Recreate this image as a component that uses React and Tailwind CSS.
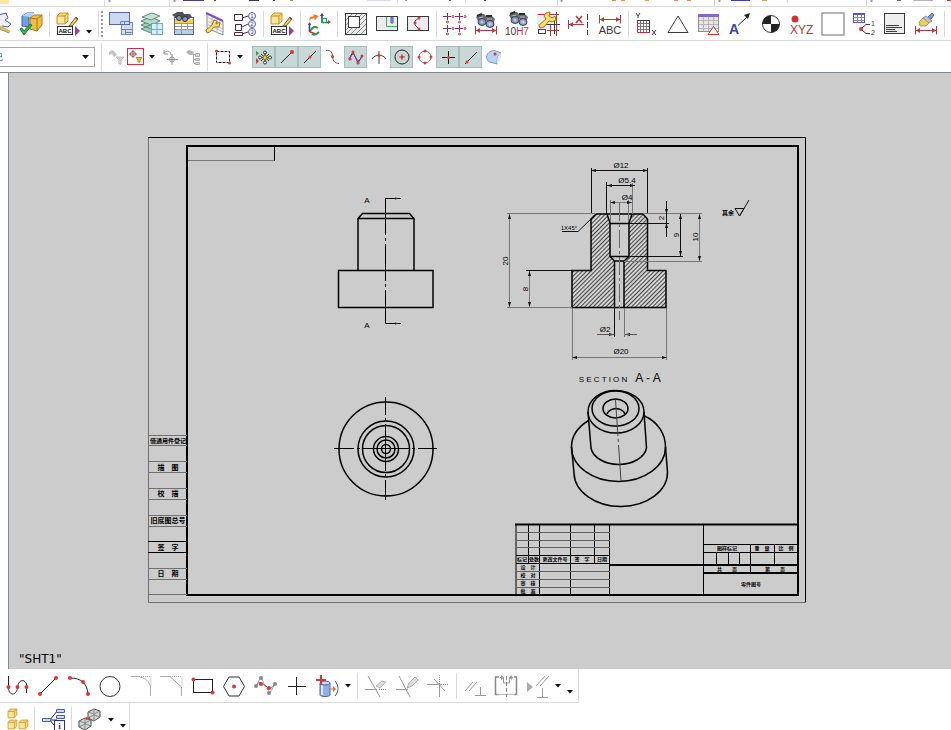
import React from 'react';

const RED = '#b5383a';
const INK = '#3a3a3a';

function Icon({ children, size = 24 }) {
  return (
    <svg width={size} height={size} viewBox={`0 0 ${size} ${size}`} fill="none" className="shrink-0 overflow-visible">
      {children}
    </svg>
  );
}

function Tool({ label, children }) {
  return (
    <button type="button" aria-label={label} className="flex h-[33px] w-[31px] shrink-0 items-center justify-center">
      {children}
    </button>
  );
}

function Snap({ label, on, children }) {
  return (
    <button
      type="button"
      aria-label={label}
      className={
        on
          ? 'flex h-[22px] w-[23px] shrink-0 items-center justify-center border border-[#a3c0bc] bg-[#c8d8d6]'
          : 'flex h-[22px] w-[23px] shrink-0 items-center justify-center'
      }
    >
      {children}
    </button>
  );
}

function Caret({ label = 'More', low }) {
  return (
    <button type="button" aria-label={label} className={low ? 'flex w-3 shrink-0 items-center justify-center self-stretch pt-3' : 'flex w-3 shrink-0 items-center justify-center self-stretch'}>
      <svg width="6" height="4" viewBox="0 0 6 4"><path d="M0 0H6L3 3.500z" fill="#111" /></svg>
    </button>
  );
}

function Sep() {
  return <div className="ml-[3px] mr-0.5 h-[26px] w-px shrink-0 bg-[#d9d9d9]" />;
}

function Dot({ x, y, r = 2, c = '#d93636' }) {
  return <circle cx={x} cy={y} r={r} fill={c} />;
}

// parts shared by several icons
function Binoculars({ y = 0 }) {
  return (
    <g transform={`translate(0 ${y})`}>
      <path d="M2 4L6 1H10L12 3H18L21 6L20 9H14L11 7L8 8H4z" fill="#6a6d73" />
      <path d="M3 3L8 1M12 3L18 3" stroke="#2c2c2c" strokeWidth="2" />
      <path d="M5 5L9 4M13 6L18 6" stroke="#b5b8be" />
      <ellipse cx="8" cy="9" rx="4" ry="3.500" fill="#8794bd" stroke="#3d4148" />
      <ellipse cx="16" cy="11" rx="4" ry="3.500" fill="#8fa0d6" stroke="#3d4148" />
      <circle cx="8" cy="9" r="1.500" fill="#b9c4e8" />
      <circle cx="16" cy="11" r="1.500" fill="#c6d2f4" />
    </g>
  );
}

function DimBar({ y = 19 }) {
  return (
    <g transform={`translate(0 ${y})`}>
      <path d="M1.500 -4V4.500M22.500 -4V4.500M2 0.500H22" stroke={RED} />
      <path d="M2 .5L6 -2V3zM22 .5L18 -2V3z" fill={RED} />
    </g>
  );
}

function Box({ x, y, s = 1 }) {
  return (
    <g transform={`translate(${x} ${y}) scale(${s})`} strokeLinejoin="round">
      <path d="M0 3L3 0H11V8L8 11H0z" fill="#f7d770" stroke="#c49b35" />
      <path d="M0 3H8L11 0M8 3V11" stroke="#c49b35" />
      <path d="M1 4H7V10H1z" fill="#fbe59a" />
    </g>
  );
}

function GlassBox({ x, y }) {
  return (
    <g transform={`translate(${x} ${y})`} stroke="#4c4c4c" strokeLinejoin="round">
      <path d="M1 4L7 1L13 3V9L7 13L1 10z" fill="#d3d6d6" />
      <path d="M1 4L7 6L13 3M7 6V13M7 1V7L1 10M7 7L13 9" stroke="#8a8a8a" />
    </g>
  );
}

function Wrench({ x = 0, y = 0 }) {
  return (
    <g transform={`translate(${x} ${y})`}>
      <path d="M8 1L12 0L11 4L14 6L17 4L18 8L14 10L11 9L6 15L2 16L1 13L8 7L6 4z" fill="#f6dc68" stroke="#9c7a1c" />
    </g>
  );
}

function AnnotateIcon() {
  return (
    <Icon>
      <Box x={1} y={1} />
      <path d="M13 14L20 5L22 7L16 14z" fill="#f2ce62" stroke="#7d6327" />
      <path d="M20 6L21 7" stroke="#c03030" strokeWidth="2" />
      <rect x="1.500" y="14.500" width="15" height="8" fill="#fff" stroke="#332c3c" />
      <text x="9" y="21" fontSize="6" fontWeight="700" textAnchor="middle" fill="#111" fontFamily="Liberation Sans, sans-serif">ABC</text>
      <path d="M19 14L24 19L19 24z" fill="#9b3aa8" />
    </Icon>
  );
}

const clippedTop = [
  ['w-[9px]', 'bg-[#fbe7a0]'],
  ['w-[174px]', ''],
  ['w-[21px]', 'bg-[#4b3a86]'],
  ['w-[10px]', ''],
  ['w-[2px]', 'bg-[#555555]'],
  ['w-[33px]', ''],
  ['w-[10px]', 'bg-[#3a3a3a]'],
  ['w-[14px]', ''],
  ['w-[2px]', 'bg-[#444444]'],
  ['w-[15px]', ''],
  ['w-[3px]', 'bg-[#b9965a]'],
  ['w-[74px]', ''],
  ['w-[24px]', 'bg-[#d9daf2]'],
  ['w-[14px]', ''],
  ['w-[2px]', 'bg-[#8f8f9b]'],
  ['w-[42px]', ''],
  ['w-[2px]', 'bg-[#5a5a8f]'],
  ['w-[33px]', ''],
  ['w-[2px]', 'bg-[#444444]'],
  ['w-[126px]', ''],
  ['w-[4px]', 'bg-[#ee8a4c]'],
  ['w-[5px]', ''],
  ['w-[4px]', 'bg-[#ee8a4c]'],
  ['w-[20px]', ''],
  ['w-[4px]', 'bg-[#d9a545]'],
  ['w-[25px]', ''],
  ['w-[4px]', 'bg-[#ee8a4c]'],
  ['w-[9px]', ''],
  ['w-[4px]', 'bg-[#ee8a4c]'],
  ['w-[40px]', ''],
  ['w-[19px]', 'bg-[#3d3dbb]'],
  ['w-[12px]', ''],
  ['w-[5px]', 'bg-[#cda94e]'],
  ['w-[130px]', ''],
  ['w-[4px]', 'bg-[#6e6480]'],
  ['w-[12px]', ''],
  ['w-[20px]', 'bg-[#b5b5b5]'],
  ['w-[14px]', ''],
  ['w-[4px]', 'bg-[#b5383a]'],
];

function TopStrip() {
  return (
    <div className="relative h-[7px] shrink-0 overflow-hidden border-b border-[#d9d9d9]">
      <div className="flex">
        {clippedTop.map(([w, c], i) => (
          <span key={i} className={`${i === 0 ? 'h-1' : 'h-px'} shrink-0 ${w} ${c}`} />
        ))}
      </div>
      <svg className="absolute left-0 top-0 h-1.5 w-full">
        <path d="M104.500 0V6M169.500 0V6M397.500 0V3M465.500 0V3M557.500 0V6M714.500 0V6M787.500 0V3M866.500 0V6" stroke="#d9d9d9" />
        <path d="M109.500 0V2M174.500 0V2M561.500 0V2M719.500 0V2M871.500 0V2" stroke="#999" strokeWidth="2" />
      </svg>
    </div>
  );
}

function DraftingBar() {
  return (
    <div className="flex h-[34px] shrink-0 items-center overflow-hidden border-b border-[#d9d9d9]">
      <div className="-ml-4 flex">
        <Tool label="Sketch section">
          <Icon>
            <path d="M10 3L18 1L20 6L17 8L23 12L20 15L14 14" stroke="#5558b8" fill="#eef0ff" />
            <path d="M10 14L22 20" stroke="#d9b95c" strokeWidth="3" />
            <path d="M9 16L21 21" stroke="#7f9f8f" />
          </Icon>
        </Tool>
      </div>
      <Tool label="Update views">
        <Icon>
          <path d="M3 4L8 1H15L10 5V15L3 14z" fill="#6fa0e6" stroke="#3c65a8" />
          <path d="M3 4L8 1H16L11 5z" fill="#b3d3fa" />
          <path d="M11 6L15 3L23 3V13L18 19L11 17z" fill="#efbd3f" stroke="#a67a1c" />
          <path d="M11 6L18 7L23 3M18 7V19" stroke="#a67a1c" />
          <path d="M1 17L3 16L5 19L11 12L13 13L5 23z" fill="#35b24c" stroke="#1e7d33" />
        </Icon>
      </Tool>
      <Sep />
      <Tool label="Edit annotation"><AnnotateIcon /></Tool>
      <div className="flex h-4 self-end"><Caret /></div>
      <Sep />
      <div className="h-[26px] w-0 border-l-2 border-dotted border-[#999999]" />
      <div className="w-0.5" />
      <Tool label="New sheet">
        <Icon>
          <rect x="12.500" y="10.500" width="11" height="12" fill="#d2dcf3" stroke="#7a89b8" />
          <rect x=".5" y=".5" width="20" height="12" fill="#cdd8f2" stroke="#5668a8" />
          <path d="M11.500 12V9.500H20M15.500 10V12" stroke="#7783a2" />
          <path d="M13 17.500H23M16.500 18V22M16 20.500H23" stroke="#7783a2" />
        </Icon>
      </Tool>
      <Tool label="View layers">
        <Icon>
          <path d="M1 17L10 13L20 17L11 21zM1 13L10 9L20 13L11 17z" fill="#a3cfbd" stroke="#5f8b7c" />
          <path d="M1 9L11 5L20 9L11 13z" fill="#b4dcca" stroke="#5f8b7c" />
          <path d="M2 5L12 1L20 4L11 8z" fill="#c3e6d5" stroke="#5f8b7c" />
          <rect x="11.500" y="11.500" width="11" height="11" fill="#d6effa" stroke="#74a8c2" />
          <path d="M11 17.500H23M17 11V23" stroke="#74a8c2" />
        </Icon>
      </Tool>
      <Tool label="Find in parts list">
        <Icon>
          <rect x="3.500" y="5.500" width="19" height="17" fill="#fff" stroke="#666" />
          <rect x="4" y="7" width="18" height="4" fill="#f6cf4c" />
          <rect x="4" y="17" width="18" height="5" fill="#b5cdf0" />
          <path d="M4 11.500H22M4 14.500H22M4 17.500H22M10.500 11V22M16.500 11V17" stroke="#999" />
          <path d="M1 3L6 0H12L13 2H19L21 5L18 7L13 7L9 7L5 6z" fill="#50535a" />
          <ellipse cx="8" cy="6" rx="2.500" ry="2.500" fill="#8797c2" stroke="#333" />
          <ellipse cx="14" cy="7" rx="2.500" ry="2.500" fill="#8797c2" stroke="#333" />
        </Icon>
      </Tool>
      <Tool label="Edit view grid">
        <Icon>
          <path d="M5 1L21 9V23L5 16z" fill="#f6f6fb" stroke="#888" />
          <path d="M5 5L21 13M5 9L21 17M5 12L21 20M10 4V18M15 6V21" stroke="#bbb" />
          <path d="M4 1L21 9" stroke="#7f4cc8" strokeWidth="2" />
          <path d="M12 8L15 9L14 12L18 10L17 15L12 15L8 20L5 21L4 18L10 13z" fill="#f6dc68" stroke="#9c7a1c" />
        </Icon>
      </Tool>
      <Tool label="Auto balloon">
        <Icon>
          <path d="M1.500 2.500h8v6h-8zM2.500 12.500h6v6h-6zM1.500 20.500h8v3h-8zM9 6L15 4M9 15L15 12M9 22L15 20" stroke="#4a2f3c" />
          {[4, 12, 20].map((y, i) => (
            <g key={y}>
              <circle cx="19" cy={y} r="3.500" stroke="#5354a5" />
              <text x="19" y={y + 2} fontSize="6" textAnchor="middle" fill="#3c3d90" fontFamily="Liberation Sans, sans-serif">{i + 1}</text>
            </g>
          ))}
        </Icon>
      </Tool>
      <Sep />
      <Tool label="Edit text"><AnnotateIcon /></Tool>
      <Sep />
      <Tool label="Orient">
        <Icon>
          <path d="M2 9L3 5L7 4L6 2L12 4L8 8L7 6L4 7z" fill="#ee7c2f" />
          <path d="M15 11V3M15 10.500H22" stroke="#2a3c9c" strokeWidth="1.500" />
          <path d="M13 4L15 1L17 4z" fill="#2a3c9c" />
          <path d="M21 8L24 10L21 12z" fill="#c23434" />
          <rect x="15.500" y="6.500" width="4" height="4" stroke="#2aa04a" />
          <path d="M2.500 20V11" stroke="#2a3c9c" strokeWidth="1.500" />
          <path d="M1 13L2.500 10L4 13z" fill="#2a3c9c" />
          <path d="M3 19L7 15M3 20L9 22" stroke="#c23434" strokeWidth="1.500" />
          <path d="M4 18C5 15 8 14 11 16M5 22C8 24 10 22 12 20" stroke="#2aa04a" strokeWidth="2" />
        </Icon>
      </Tool>
      <Sep />
      <Tool label="Crosshatch">
        <Icon>
          <rect x="1.500" y="1.500" width="21" height="21" fill="#e9e9e9" stroke={INK} />
          <path d="M2 8L8 2M2 13L13 2M2 18L18 2M2 22L22 2M7 22L22 7M12 22L22 12M17 22L22 17" stroke="#8c8c8c" />
          <rect x="4.500" y="4.500" width="11" height="11" fill="#fff" stroke={INK} />
        </Icon>
      </Tool>
      <Tool label="Break-out section">
        <Icon>
          <rect x="1.500" y="4.500" width="21" height="14" fill="#ececec" stroke={INK} />
          <path d="M11.500 5V14.500H22" stroke="#4aa95a" />
          <path d="M15 5H19V11H15z" fill="#98a1dc" />
          <path d="M17 5V12" stroke="#4b55a8" />
        </Icon>
      </Tool>
      <Tool label="Section curve">
        <Icon>
          <rect x="1.500" y="4.500" width="21" height="14" fill="#ececec" stroke={INK} />
          <path d="M14 5L9 9V13L14 18" stroke="#4547bd" />
          <Dot x={13} y={6} r={1.5} /><Dot x={9} y={11} r={1.5} /><Dot x={13} y={17} r={1.5} />
        </Icon>
      </Tool>
      <Sep />
      <Tool label="Center marks">
        <Icon>
          {[[0, 0], [12, 0], [0, 12], [12, 12]].map(([x, y]) => (
            <g key={`${x}-${y}`} transform={`translate(${x} ${y})`}>
              <path d="M0 4.500H8M4.500 1V8" stroke="#4a3c9c" />
              <circle cx="4.500" cy="10" r="1" stroke={RED} />
              <circle cx="10" cy="4.500" r="1" stroke={RED} />
              <path d="M3 4.500H6" stroke={RED} />
            </g>
          ))}
        </Icon>
      </Tool>
      <Tool label="Find dimension"><Icon><Binoculars y={1} /><DimBar y={18} /></Icon></Tool>
      <Tool label="Find fit">
        <Icon>
          <g transform="translate(2 -1)"><Binoculars /></g>
          <text x="0" y="23" fontSize="10" fontFamily="Liberation Sans, sans-serif" fill={INK}>10<tspan fill={RED}>H7</tspan></text>
        </Icon>
      </Tool>
      <Tool label="Drafting settings">
        <Icon>
          <path d="M1 1H16V17H1z" fill="#ececec" />
          <path d="M2 2.500H23M20.500 0V24M11 18.500H23M14.500 13V24" stroke={RED} />
          <path d="M18.500 8V22M8 12.500H24" stroke={INK} />
          <Wrench x={2} y={0} />
          <rect x="2.500" y="17.500" width="7" height="4" stroke="#3c3d90" />
        </Icon>
      </Tool>
      <Tool label="Chamfer dimension">
        <Icon>
          <path d="M1.500 8V17M2 12.500H17" stroke={RED} />
          <path d="M2 12.500L6 10V15z" fill={RED} />
          <path d="M9 4L15 11M15 4L9 11" stroke={RED} strokeWidth="1.500" />
          <path d="M20.500 2V23" stroke={INK} strokeDasharray="6 2" />
        </Icon>
      </Tool>
      <Tool label="Dimension text">
        <Icon>
          <DimBar y={7} />
          <text x="12" y="22" fontSize="11" textAnchor="middle" fontFamily="Liberation Sans, sans-serif" fill={INK}>ABC</text>
        </Icon>
      </Tool>
      <Sep />
      <Tool label="Coordinate grid">
        <Icon>
          <path d="M5.500 9V20M8.500 9V20M11.500 9V20M3 11.500H15M3 14.500H15M3 17.500H15" stroke="#777" />
          <path d="M2 8.500H15M14.500 8V21" stroke={INK} />
          <path d="M2.500 8V20.500H15" stroke="#c92c2c" />
          <path d="M1 1L3 4L5 1M3 4V6M17 18L21 23M21 18L17 23" stroke={INK} />
        </Icon>
      </Tool>
      <Tool label="Datum target"><Icon><path d="M12 4L22 20.500H2z" stroke={INK} /></Icon></Tool>
      <Tool label="Revision table">
        <Icon>
          <rect x="1.500" y="2.500" width="20" height="17" fill="#e6e6e6" stroke="#8f8f8f" />
          <path d="M1 2H22V5H1z" fill="#8a64cf" />
          <path d="M2 8.500H21M2 12.500H21M2 16.500H21M6.500 5V19M11.500 5V19M16.500 5V19" stroke="#b5b5b5" />
          <path d="M16.500 14.500L22 22.500H11z" fill="#fff" stroke="#d33" />
        </Icon>
      </Tool>
      <Tool label="Leader note">
        <Icon>
          <text x="1" y="22" fontSize="14" fontWeight="700" fontFamily="Liberation Sans, sans-serif" fill="#3e41a8">A</text>
          <path d="M10 13.500L20 4" stroke="#222" />
          <path d="M22 1L20 7L16 3z" fill="#222" />
        </Icon>
      </Tool>
      <Tool label="Target point">
        <Icon>
          <circle cx="12" cy="12" r="8.500" fill="#fff" stroke={INK} />
          <path d="M12 12V3.500A8.500 8.500 0 0 0 3.500 12zM12 12V20.500A8.500 8.500 0 0 0 20.500 12z" fill="#222" />
        </Icon>
      </Tool>
      <Tool label="Point coordinates">
        <Icon>
          <Dot x={5} y={7} r={3.5} c="#cf3333" />
          <text x="0" y="22" fontSize="12" fontFamily="Liberation Sans, sans-serif" fill={RED}>XYZ</text>
        </Icon>
      </Tool>
      <Tool label="Frame"><Icon><rect x="1" y="1" width="22" height="22" fill="#fff" stroke="#9a9a9a" strokeWidth="1.500" /></Icon></Tool>
      <Tool label="Sort table">
        <Icon>
          <rect x="1.500" y="1.500" width="11" height="9" fill="#fff" stroke="#5558b8" />
          <path d="M1 1H13V3H1z" fill="#5558c8" />
          <path d="M2 5.500H12M2 8.500H12M5.500 3V10M9.500 3V10" stroke="#7f82c8" />
          <Dot x={9} y={17} r={2} />
          <path d="M10 16L14 12.500H18M10 18L14 21.500H18" stroke={INK} />
          <text x="19" y="14" fontSize="7" fill={INK} fontFamily="Liberation Sans, sans-serif">1</text>
          <text x="19" y="23" fontSize="7" fill={INK} fontFamily="Liberation Sans, sans-serif">2</text>
        </Icon>
      </Tool>
      <Tool label="Note">
        <Icon>
          <rect x="1.500" y="1.500" width="20" height="20" fill="#efefef" stroke={INK} />
          <path d="M3 13.500H16M3 15.500H19M3 17.500H12M3 19.500H14" stroke={INK} />
        </Icon>
      </Tool>
      <Tool label="Clean dimensions">
        <Icon>
          <path d="M14 5L18 1L20 3L17 7z" fill="#7c9bdc" stroke="#5a6a9a" />
          <path d="M12 4L18 9L15 11L9 6z" fill="#b9c6da" stroke="#8894a8" />
          <path d="M9 6L15 11L12 14H6L5 10z" fill="#e9cb6c" stroke="#b99c48" />
          <DimBar y={18} />
        </Icon>
      </Tool>
      <Sep />
    </div>
  );
}

function SelectionBar() {
  return (
    <div className="flex h-8 shrink-0 items-center overflow-hidden border-b border-[#7f8a92]">
      <div className="relative -ml-1.5 w-[101px] shrink-0">
        <select aria-label="Selection scope" className="block h-5 w-full appearance-none border border-[#a6a6a6] bg-white text-[8px] leading-4 text-[#1f4f9c] [font-family:'Noto_Sans_CJK_SC',sans-serif]">
          <option>己</option>
        </select>
        <svg className="pointer-events-none absolute right-1.5 top-2" width="7" height="5" viewBox="0 0 7 5"><path d="M0 0H7L3.500 4z" fill="#111" /></svg>
      </div>
      <div className="ml-1.5 mr-0.5 h-7 w-px bg-[#d9d9d9]" />
      <Snap label="Filter reset">
        <Icon size={16}>
          <path d="M1 3L4 1L7 3L9 6L6 8L4 5L1 6z" fill="#c3c3c3" />
          <path d="M8 8H16L13 11V15H11V11z" fill="#d6d6d6" stroke="#bbb" />
        </Icon>
      </Snap>
      <button type="button" aria-label="Selection filter" className="mr-0.5 flex h-[17px] w-[17px] items-center justify-center border border-[#cf2f3f]">
        <Icon size={16}>
          <circle cx="5" cy="5" r="2.500" stroke="#9c5a5a" />
          <path d="M5 1V9M1 5H9" stroke="#9c5a5a" />
          <path d="M8 8.500H14L12 11V13H10V11z" fill="#eeb53c" stroke="#c08c2c" />
        </Icon>
      </button>
      <Caret />
      <Snap label="Snap point off">
        <Icon size={16}>
          <path d="M2 4C5 1 9 2 9 6M2 1V5H6" stroke="#909090" />
          <path d="M10 5V16M5 10.500H16" stroke="#909090" />
          <circle cx="10" cy="10.500" r="2.500" stroke="#909090" />
        </Icon>
      </Snap>
      <Snap label="Select parent">
        <Icon size={16}>
          <path d="M1 3L4 1L9 3L8 6L4 6z" fill="#b5b5b5" />
          <path d="M8 5.500H14M8.500 6V14M9 10.500H14M9 14.500H14" stroke="#a5a5a5" />
          <path d="M10.500 4.500h4v3h-4zM10.500 9.500h4v2h-4zM10.500 13.500h4v2h-4z" fill="#ddd" stroke="#aaa" />
        </Icon>
      </Snap>
      <div className="mx-[3px] h-7 w-px bg-[#d9d9d9]" />
      <Snap label="Rectangle select">
        <Icon size={16}>
          <rect x="1.500" y="2.500" width="13" height="11" stroke="#222" strokeDasharray="3 1" />
          <Dot x={1.5} y={2} r={1.5} /><Dot x={14.5} y={14} r={1.5} />
        </Icon>
      </Snap>
      <Caret />
      <div className="w-1.5 shrink-0" />
      <Snap label="Enable snap point" on>
        <Icon size={18}>
          <path d="M1 3L4 5L1 8z" fill="#23a84b" />
          <path d="M1 10L4 13L1 16z" fill="#d33" />
          <path d="M10 3V16M4 9.500H17M6 6L14 13M14 6L6 13" stroke="#333" />
          <circle cx="10" cy="4.500" r="1.500" fill="#fff" stroke="#333" /><circle cx="10" cy="14.500" r="1.500" fill="#fff" stroke="#333" />
          <circle cx="5" cy="9.500" r="1.500" fill="#fff" stroke="#333" /><circle cx="15" cy="9.500" r="1.500" fill="#fff" stroke="#333" />
          <circle cx="10" cy="9.500" r="2" fill="#f3d231" stroke="#85741c" />
        </Icon>
      </Snap>
      <Snap label="End point" on><Icon size={16}><path d="M2 14L13 3" stroke="#222" /><Dot x={13} y={3} /></Icon></Snap>
      <Snap label="Mid point" on><Icon size={16}><path d="M2 14L14 2" stroke="#222" /><Dot x={8} y={8} r={1.5} /></Icon></Snap>
      <Snap label="Control point"><Icon size={16}><path d="M1 1.500C5 1 7 2 7.500 7C8 13 10 14 14 14.500" stroke="#555" /><Dot x={7.5} y={7.5} r={1.5} /></Icon></Snap>
      <Snap label="Pole" on>
        <Icon size={16}>
          <path d="M1 10L5 3L10 14L14 7" stroke="#222" />
          <path d="M2 10C4 3 6 5 8 9C10 13 12 12 14 7" stroke="#9a32c4" />
          <Dot x={2} y={10} r={1.5} /><Dot x={5} y={3} r={1.5} /><Dot x={10} y={14} r={1.5} /><Dot x={14} y={7} r={1.5} />
        </Icon>
      </Snap>
      <Snap label="Intersection"><Icon size={16}><path d="M1 10C4 5 12 5 15 10M8 2V15" stroke="#444" /><Dot x={8} y={6.5} r={1.5} /></Icon></Snap>
      <Snap label="Arc center" on><Icon size={18}><circle cx="9" cy="9" r="7" stroke="#222" /><path d="M6 9H12M9 6V12" stroke="#d33" /><Dot x={9} y={9} r={1.5} /></Icon></Snap>
      <Snap label="Quadrant point"><Icon size={16}><circle cx="8" cy="8" r="6" stroke="#777" /><Dot x={8} y={2} r={1.5} /><Dot x={14} y={8} r={1.5} /><Dot x={8} y={14} r={1.5} /><Dot x={2} y={8} r={1.5} /></Icon></Snap>
      <Snap label="Existing point" on><Icon size={16}><path d="M8.500 2V15M2 8.500H15" stroke="#111" /><Dot x={8.5} y={8.5} r={1.5} /></Icon></Snap>
      <Snap label="Point on curve" on><Icon size={16}><path d="M2 15L14 3" stroke="#222" /><Dot x={4} y={13} r={1.5} /></Icon></Snap>
      <Snap label="Point on face">
        <Icon size={16}>
          <path d="M1 6C3 2 7 1 10 2L15 4C12 6 11 9 11 15L4 13C1 12 0 9 1 6z" fill="#b8d3f3" stroke="#7596c2" />
          <path d="M15 4V10L11 15C11 9 12 6 15 4z" fill="#e3e8ef" /><Dot x={9} y={5} r={1.5} />
        </Icon>
      </Snap>
    </div>
  );
}

// dimension line with slim arrowheads at both ends
function Dim({ x1, y1, x2, y2, c = '#111' }) {
  const vertical = x1 === x2;
  return (
    <g>
      <path d={`M${x1} ${y1}L${x2} ${y2}`} stroke={c} />
      {vertical ? (
        <path d={`M${x1} ${y1}l-1.500 5h3zM${x2} ${y2}l-1.500 -5h3z`} fill="#111" />
      ) : (
        <path d={`M${x1} ${y1}l5 -1.500v3zM${x2} ${y2}l-5 -1.500v3z`} fill="#111" />
      )}
    </g>
  );
}

function Label({ x, y, turn, size = 8, children }) {
  return (
    <text x={x} y={y} fontSize={size} textAnchor="middle" fill="#000" transform={turn ? `rotate(-90 ${x} ${y})` : undefined}>
      {children}
    </text>
  );
}

const sideLabels = [
  [443, '借通用件登记'],
  [470, '描　图'],
  [496, '校　描'],
  [523, '旧底图总号'],
  [550, '签　字'],
  [576, '日　期'],
];

const blockLabels = [
  [522, 561, '标记'], [534, 561, '处数'], [555, 561, '更改文件号'], [582, 561, '签　字'], [602, 561, '日期'],
  [528, 569, '设　计'], [528, 577, '校　对'], [528, 585, '审　核'], [528, 593, '批　准'],
  [727, 550, '图样标记'], [762, 550, '重　量'], [786, 550, '比　例'],
  [727, 571, '共　　页'], [775, 571, '第　　页'], [751, 586, '零件图号'],
];

function Drawing() {
  return (
    <svg viewBox="9 73 942 596" className="block h-full w-full" fill="none" fontFamily="'Liberation Sans', sans-serif" role="img" aria-label="Drawing sheet">
      <defs>
        <pattern id="hatch" width="3" height="3" patternUnits="userSpaceOnUse" patternTransform="rotate(45)">
          <rect width="3" height="3" fill="#d3d3d3" />
          <path d="M0.500 0V3" stroke="#444" />
        </pattern>
      </defs>

      {/* sheet frame */}
      <path d="M148 137.500H805.500V602" stroke="#000" />
      <path d="M148.500 138V602.500H806" stroke="#707070" />
      <path d="M187 146H798V595H187z" stroke="#000" strokeWidth="2" />
      <path d="M188 160.500H274" stroke="#777" />
      <path d="M274.500 146V161" stroke="#000" />
      <path d="M148 435.500H187M148 445.500H187M148 461.500H187M148 472.500H187M148 488.500H187M148 499.500H187M148 515.500H187M148 526.500H187M148 568.500H187M148 579.500H187M148 594.500H187" stroke="#707070" />
      <path d="M148 541.500H187M148 552.500H187" stroke="#000" />

      {/* title block */}
      <path d="M516 524V595M539.500 524V595M570.500 524V595M528.500 524V563M594.500 524V563M609.500 524V595M703.500 524V595M516 555.500H610M516 563.500H610M704 544.500H798M704 552.500H798M750.500 544V573M774.500 544V565M716.500 552V565M728.500 552V565M739.500 552V565" stroke="#000" />
      <path d="M515 524.500H798M610 565H798M704 573H798" stroke="#000" strokeWidth="2" />
      <path d="M516 532.500H610M516 540.500H610M516 547.500H610M516 571.500H610M516 579.500H610M516 587.500H610" stroke="#606060" />
      <g fontFamily="'Noto Sans CJK SC', sans-serif" fontWeight="700" fill="#000" textAnchor="middle">
        {sideLabels.map(([y, t]) => (
          <text key={t} x="168" y={y} fontSize={t.length > 5 ? 6 : 7}>{t}</text>
        ))}
        {blockLabels.map(([x, y, t]) => (
          <text key={t} x={x} y={y} fontSize="5">{t}</text>
        ))}
        <text x="728" y="215" fontSize="6">其余</text>
      </g>

      {/* front view */}
      <path d="M338.500 270.500H433V307.500H338.500zM358 270V218.500L362.500 213.500H409.500L414 218.500V270M358 218.500H414" stroke="#000" strokeWidth="1.500" />
      <path d="M385.500 198V323.500" stroke="#000" strokeDasharray="37 3 3 3" />
      <path d="M385.500 198.500H401M385.500 323.500H401" stroke="#000" />
      <path d="M395 197.500L399 198.500L395 199.500zM395 322.500L399 323.500L395 324.500z" fill="#222" />
      <Label x={367} y={203}>A</Label>
      <Label x={367} y={328}>A</Label>

      {/* plan view */}
      <g stroke="#000" strokeWidth="1.500">
        <circle cx="386" cy="449" r="47" />
        <circle cx="386" cy="449" r="28" />
        <circle cx="386" cy="449" r="23.500" />
        <circle cx="386" cy="449" r="12.500" />
        <circle cx="386" cy="449" r="9" />
        <circle cx="386" cy="449" r="4.500" />
      </g>
      <path d="M334 448.500H354M357 448.500H360M363 448.500H409M412 448.500H415M418 448.500H437M385.500 397V415M385.500 418V421M385.500 424V471M385.500 474V477M385.500 480V500" stroke="#000" />

      {/* section A-A */}
      <path d="M572 307.500V270.500H591V219L596 214H607L610 223V256.500L614.500 261V307.500z" fill="url(#hatch)" />
      <path d="M666 307.500V270.500H647.500V219L643 214H632L629 223V256.500L624 261V307.500z" fill="url(#hatch)" />
      <path d="M572 307.500V270.500H591V219L596 214H643L647.500 219V270.500H666V307.500z" stroke="#000" strokeWidth="1.500" />
      <path d="M607 214L610 223V256.500L614.500 261V307M632 214L629 223V256.500L624 261V307M610 223.500H629M610 256.500H629M614 261H624" stroke="#000" strokeWidth="1.500" />
      <path d="M619.500 203V320" stroke="#666" strokeDasharray="18 3 3 3" />

      <path d="M591.500 168V214M647.500 168V214M606.500 182V214M614.500 308V337M526 270.500H591M629 223.500H669M629 256.500H683" stroke="#111" />
      <path d="M632.500 183V214M610.500 200V222M628.500 200V222M507 213.500H596M643 213.500H702M624 261.500H702M507 307.500H572M572.500 308V360M666.500 308V360M624.500 308V337" stroke="#777" />
      <Dim x1={591} y1={170.5} x2={648} y2={170.5} />
      <Dim x1={607} y1={185.5} x2={635} y2={185.5} />
      <Dim x1={610} y1={202.5} x2={632} y2={202.5} c="#777" />
      <Dim x1={680.5} y1={214} x2={680.5} y2={256} />
      <Dim x1={699.5} y1={214} x2={699.5} y2={261} c="#777" />
      <Dim x1={509.5} y1={214} x2={509.5} y2={307} c="#777" />
      <Dim x1={529.5} y1={271} x2={529.5} y2={307} c="#777" />
      <Dim x1={572} y1={357.5} x2={667} y2={357.5} c="#777" />
      <path d="M666.500 201V237" stroke="#111" />
      <path d="M666.500 214l-1.500 -5h3zM666.500 223l-1.500 5h3zM614 334.500l-5 -1.500v3zM625 334.500l5 -1.500v3z" fill="#111" />
      <path d="M597 334.500H614M625 334.500H637" stroke="#555" />
      <path d="M562 231.500H578L591 219" stroke="#111" />
      <Label x={621} y={168}>Ø12</Label>
      <Label x={627} y={183}>Ø5.4</Label>
      <Label x={627} y={200}>Ø4</Label>
      <Label x={605} y={332}>Ø2</Label>
      <Label x={621} y={354}>Ø20</Label>
      <Label x={569} y={230} size={6}>1X45°</Label>
      <Label x={664} y={218} turn>2</Label>
      <Label x={679} y={235} turn>9</Label>
      <Label x={698} y={237} turn>10</Label>
      <Label x={508} y={261} turn>20</Label>
      <Label x={528} y={289} turn>8</Label>
      <Label x={603} y={382}>S E C T I O N</Label>
      <Label x={648} y={382} size={12}>A - A</Label>
      <path d="M735 208.500H744L739.500 216zM739.500 216L749 200" stroke="#111" />

      {/* isometric view */}
      <g stroke="#000" strokeWidth="1.500">
        <ellipse cx="615.500" cy="408.500" rx="23.500" ry="17.500" />
        <ellipse cx="615.500" cy="408.500" rx="12.500" ry="9.500" />
        <path d="M607 414C608 411 612 408.500 616 408.500C620 408.500 624 411 625 414" />
        <path d="M588 412C588 399 602 390 616 390.500C631 391 644 399 644 412A28 21 0 0 1 588 412z" />
        <path d="M588 412L591 448A28 19 0 0 0 646.500 448L644 412" />
        <path d="M588.500 420.500C578 427 571.500 435 571.500 447A47 34.500 0 0 0 665.500 447C665.500 434 658 422 644.500 416" />
        <path d="M571.500 447L574 473A46.750 34 0 0 0 667.500 472L665.500 447" />
      </g>
      <path d="M615.500 400L621 481" stroke="#444" strokeDasharray="36 3 3 3" />
    </svg>
  );
}

function SketchBar() {
  return (
    <div className="flex shrink-0">
      <div className="flex h-[34px] items-center border-b border-r border-[#d9d9d9] pl-px pr-0.5">
        <Tool label="Profile"><Icon><path d="M3.500 2V14C4 22 11 22 12.500 14C13 5 20 5 21.500 10V19" stroke="#222" /><Dot x={3.5} y={13} /><Dot x={12.5} y={13} /><Dot x={21.5} y={13} /></Icon></Tool>
        <Tool label="Line"><Icon><path d="M4 20L20 4" stroke="#222" /><Dot x={4} y={20} /><Dot x={20} y={4} /></Icon></Tool>
        <Tool label="Arc"><Icon><path d="M3 4C14 4 20 9 21 20" stroke="#222" /><Dot x={3} y={4} /><Dot x={16} y={8} /><Dot x={21} y={20} /></Icon></Tool>
        <Tool label="Circle"><Icon><circle cx="12" cy="12.500" r="10" stroke="#333" /></Icon></Tool>
        <Tool label="Fillet"><Icon><path d="M2 2.500H8C16 3 21 8 21.500 13V22" stroke="#aaa" /><path d="M10 2.500H22V12" stroke="#aaa" strokeDasharray="1 1" /></Icon></Tool>
        <Tool label="Chamfer"><Icon><path d="M0 2.500H10L21.500 13V22" stroke="#aaa" /><path d="M10 2.500H22V12" stroke="#aaa" strokeDasharray="1 1" /></Icon></Tool>
        <Tool label="Rectangle"><Icon><rect x="2.500" y="5.500" width="19" height="13" stroke="#222" /><Dot x={2.5} y={5.5} /><Dot x={21.5} y={18.5} /></Icon></Tool>
        <Tool label="Polygon"><Icon><path d="M7 3H17L22.500 12.500L17 22H7L1.500 12.500z" stroke="#333" /><Dot x={12} y={12.5} /></Icon></Tool>
        <Tool label="Studio spline"><Icon><path d="M3 12L8 3L12 12L17 19L22 10" stroke="#aaa" /><path d="M3 12C7 5 9 10 13 12C18 17 19 13 22 10" stroke="#666" /><Dot x={3} y={12} c="#888" /><Dot x={8} y={4} c="#888" /><Dot x={16} y={19} c="#888" /><Dot x={22} y={10} c="#888" /><Dot x={8} y={10} /><Dot x={16} y={14} /></Icon></Tool>
        <Tool label="Point"><Icon><path d="M12.500 3V21M4 12.500H22" stroke="#222" /></Icon></Tool>
        <Tool label="Project curve">
          <Icon>
            <path d="M5 9C5 7 15 7 15 9V21C15 23 5 23 5 21z" fill="#8fb0ea" stroke="#4668ac" />
            <path d="M7 10V21" stroke="#dce8ff" strokeWidth="2" />
            <ellipse cx="10" cy="9" rx="5" ry="2" fill="#c9dbfa" stroke="#4668ac" />
            <path d="M6 1V11M1 6H11" stroke="#c93a3a" strokeWidth="2" />
            <path d="M15 15H18" stroke="#e27326" /><path d="M18 12L21 15L18 18z" fill="#e27326" />
            <path d="M20 7C24 12 24 17 20 22" stroke="#4446c0" />
          </Icon>
        </Tool>
        <Caret />
        <Sep />
        <Tool label="Quick trim"><Icon><path d="M4 2L16 23M1 15.500H13" stroke="#999" /><path d="M15 15.500H23" stroke="#999" strokeDasharray="1 1" /><path d="M12 12L18 7L22 8L16 14z" fill="#ddd" stroke="#b5b5b5" /></Icon></Tool>
        <Tool label="Quick extend"><Icon><path d="M4 2L15 23M1 15.500H13" stroke="#999" /><path d="M12 14L14 9L20 3L23 6L17 12z" fill="#ddd" stroke="#aaa" /></Icon></Tool>
        <Tool label="Make corner"><Icon><path d="M1 10.500H15M13.500 10V23M8 5L19 17" stroke="#999" /><path d="M13.500 1V10M15 10.500H23" stroke="#999" strokeDasharray="1 1" /></Icon></Tool>
        <Sep />
        <Tool label="Constraints"><Icon><path d="M2 17L10 8M6 17L14 8M17.500 13V21M12 21.500H23" stroke="#999" /></Icon></Tool>
        <Tool label="Make symmetric"><Icon><path d="M5 3H1.500V20.500H5M20 3H22.500V20.500H20" stroke="#888" strokeWidth="1.500" /><path d="M3 20.500H21" stroke="#bbb" /><path d="M12.500 2V23" stroke="#888" strokeDasharray="4 2" /><path d="M6 3.500H9.500V9H12M19 3.500H15.500V9H13" stroke="#999" /><path d="M7 1L10 3.500L7 6zM18 1L15 3.500L18 6z" fill="#999" /></Icon></Tool>
        <Tool label="Show constraints"><Icon><path d="M2 8L8 13L2 18z" fill="#aaa" /><path d="M11 12L20 2M15 12L24 2M17.500 14V23M12 23.500H23" stroke="#999" /></Icon></Tool>
        <Caret />
        <Caret label="Toolbar options" low />
      </div>
    </div>
  );
}

function AssemblyBar() {
  return (
    <div className="flex h-[27px] shrink-0 overflow-hidden">
      <div className="flex h-[34px] items-center border-r border-[#d9d9d9]">
        <Tool label="Components"><Icon><Box x={4} y={1} s={0.8} /><Box x={4} y={12} s={0.8} /><Box x={15} y={12} s={0.8} /></Icon></Tool>
        <Sep />
        <Tool label="Assembly information">
          <Icon>
            <path d="M9 12L16 3M9 12H16M9 12L16 21" stroke="#333" />
            <path d="M1.500 10.500h8v3h-8zM15.500 1.500h8v3h-8zM15.500 7.500h8v3h-8z" fill="#c9d9f7" stroke="#4c62a8" />
            <rect x="13.500" y="12.500" width="10" height="11" fill="#fff" stroke="#2a2c94" />
            <text x="18.500" y="21" fontSize="9" fontWeight="700" textAnchor="middle" fill="#2a2c94" fontFamily="Liberation Serif, serif">i</text>
          </Icon>
        </Tool>
        <Sep />
        <Tool label="Wave linker"><Icon><GlassBox x={9} y={0} /><GlassBox x={0} y={9} /><path d="M8 9L12 12M12 9L8 12" stroke="#d33" /></Icon></Tool>
        <Caret />
        <Caret label="Toolbar options" low />
      </div>
    </div>
  );
}

export default function App() {
  return (
    <div className="flex h-screen flex-col overflow-hidden bg-white">
      <TopStrip />
      <DraftingBar />
      <SelectionBar />
      <main className="flex min-h-0 flex-1 pl-2">
        <div className="relative min-w-0 flex-1 border-l border-[#7f8a92] bg-[#cccccc]">
          <Drawing />
          <p className="absolute bottom-0.5 left-2.5 text-xs text-black [font-family:'DejaVu_Sans',sans-serif]">"SHT1"</p>
        </div>
      </main>
      <SketchBar />
      <AssemblyBar />
    </div>
  );
}
